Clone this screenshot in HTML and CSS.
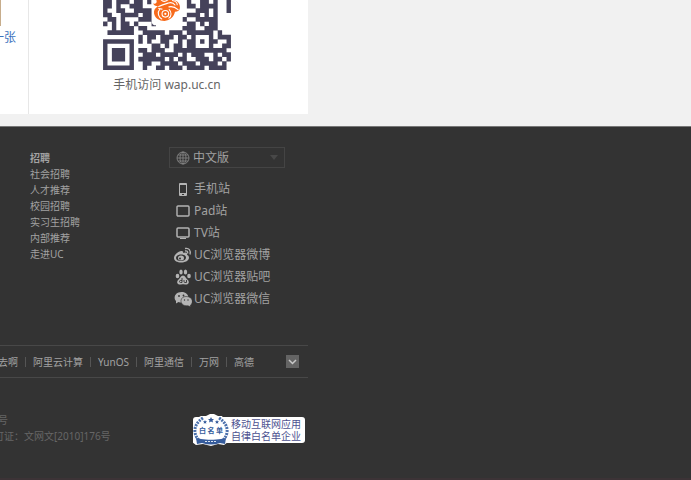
FILE: index.html
```html
<!DOCTYPE html>
<html lang="zh-CN">
<head>
<meta charset="utf-8">
<title>UC</title>
<link rel="stylesheet" href="styles.css">
</head>
<body>
<main class="top">
  <div class="panel">
    <section class="news">
      <div class="thumb"></div>
      <a class="news-link" href="#">一张</a>
    </section>
    <section class="mobile">
      <svg class="qr" viewBox="0 0 464 254" role="img" aria-label="wap.uc.cn">
        <path id="modules" fill="#45425a"/>
        <path fill="#fff" d="M176 0h112v76q0 16-16 16h-80q-16 0-16-16z"/>
        <path fill="#f76b1c" d="M193 0h62c16 3 25 15 24 28 0 10-8 15-18 15-4 19-17 31-38 33-20 0-34-10-38-27-2-11 4-20 14-26-9 0-15-4-17-10 8 2 16-3 11-13z"/>
        <g fill="none" stroke="#fff" stroke-width="4" stroke-linecap="round">
          <path d="M211 0c7 8 18 5 26-2M202 24c12-6 22-9 35-13 10-3 19 0 24 7M239 25c12-3 25 3 33 10M252 2c11 2 17 9 17 15"/>
          <circle cx="226" cy="50" r="12"/><path d="M205 35c-10 11-3 28 8 34M240 35c9 8 9 23-1 31M214 33l-12-2"/>
        </g>
        <circle cx="226" cy="50" r="4" fill="#fff"/>
      </svg>
      <p class="caption">手机访问 wap.uc.cn</p>
    </section>
  </div>
</main>
<footer class="footer">
  <div class="columns">
    <section class="jobs">
      <h2>招聘</h2>
      <ul>
        <li><a href="#">社会招聘</a></li>
        <li><a href="#">人才推荐</a></li>
        <li><a href="#">校园招聘</a></li>
        <li><a href="#">实习生招聘</a></li>
        <li><a href="#">内部推荐</a></li>
        <li><a href="#">走进UC</a></li>
      </ul>
    </section>
    <section class="sites">
      <button class="language" type="button">
        <svg width="14" height="14" viewBox="0 0 14 14" fill="none" stroke="#8c8c8c" stroke-width=".8"><circle cx="7" cy="7" r="6"/><ellipse cx="7" cy="7" rx="3" ry="6"/><path d="M7 1v12M1 7h12M2 4h10M2 10h10"/></svg>
        <span>中文版</span>
        <svg class="caret" width="8" height="5" viewBox="0 0 8 5"><path d="M0 0h8L4 5z" fill="#484848"/></svg>
      </button>
      <ul>
        <li><a href="#"><svg viewBox="0 0 18 16"><path fill="#b4b4b4" fill-rule="evenodd" d="M6 2h6q1 0 1 1v11q0 1-1 1H6q-1 0-1-1V3q0-1 1-1zM6 4v8h6V4zM8 13v1h2v-1z"/></svg>手机站</a></li>
        <li><a href="#"><svg viewBox="0 0 18 16"><rect x="3" y="3" width="12" height="10" rx="1" fill="none" stroke="#b4b4b4" stroke-width="1.4"/></svg>Pad站</a></li>
        <li><a href="#"><svg viewBox="0 0 18 16"><rect x="3" y="3" width="12" height="9" rx="1" fill="none" stroke="#b4b4b4" stroke-width="1.5"/><path d="M6 13h6v1H6z" fill="#b4b4b4"/></svg>TV站</a></li>
        <li><a href="#"><svg viewBox="0 0 18 16"><path fill="#b4b4b4" fill-rule="evenodd" d="M7 4C3 5 0 8 0 11c0 6 14 6 15 0 0-2-1-3-2-3 1-3-2-3-4-2 1-2-1-2-2-2zm0 3.500c3 0 5 1 5 3S10 14 7 14s-5-1-5-3 2-3.500 5-3.500z"/><ellipse cx="7" cy="11" rx="3" ry="2.500" fill="#b4b4b4"/><circle cx="6" cy="11.500" r="1" fill="#333"/><path d="M11 1.500c4-1 6 2 5 6M11 4c2-.500 3 .500 2.700 2.500" fill="none" stroke="#b4b4b4" stroke-width="1.300"/></svg>UC浏览器微博</a></li>
        <li><a href="#"><svg viewBox="0 0 18 16"><g fill="#b4b4b4"><ellipse cx="3.500" cy="7" rx="1.800" ry="2.300"/><ellipse cx="7" cy="3" rx="1.700" ry="2.500"/><ellipse cx="11.500" cy="3" rx="1.700" ry="2.500"/><ellipse cx="15" cy="7" rx="1.800" ry="2.300"/><path d="M9 6.500c2 0 3 3 5 4.500 2 3 0 5-3 4.500-1.500-.5-2.500-.5-4 0-3 .5-5-1.500-3-4.500 2-1.500 3-4.500 5-4.500z"/></g><path d="M8 9v4.500H6.500q-1 0-1-1t1-1H8M10 11v1.500q0 1 1 1h1.500V11" fill="none" stroke="#333" stroke-width=".9"/></svg>UC浏览器贴吧</a></li>
        <li><a href="#"><svg viewBox="0 0 18 16"><path fill="#b4b4b4" d="M7.500 1c9 0 9 10.500 0 10.500-1 0-2 0-3-.5L2 12.500V10C-1 7 1 1 7.500 1z"/><path fill="#b4b4b4" stroke="#333" stroke-width=".6" d="M12 5.500c7.500 0 7.500 7 4.500 8.500V15.800L14 14.800C5 15.500 5 5.500 12 5.500z"/><g fill="#333"><circle cx="5" cy="5" r=".9"/><circle cx="9.500" cy="4.500" r=".9"/><circle cx="10.500" cy="9" r=".7"/><circle cx="14" cy="9" r=".7"/></g></svg>UC浏览器微信</a></li>
      </ul>
    </section>
  </div>
  <nav class="partners">
    <a href="#">去啊</a><i></i><a href="#">阿里云计算</a><i></i><a href="#">YunOS</a><i></i><a href="#">阿里通信</a><i></i><a href="#">万网</a><i></i><a href="#">高德</a>
    <button class="more" type="button" aria-label="更多"><svg width="9" height="6" viewBox="0 0 9 6"><path d="M1 1l3.500 3.500L8 1" fill="none" stroke="#c8c8c8" stroke-width="1.500"/></svg></button>
  </nav>
  <div class="legal">
    <div class="license"><p>号</p><p>可证：文网文[2010]176号</p></div>
    <a class="badge" href="#">
      <svg class="seal" width="36" height="34" viewBox="0 0 36 34">
        <path fill="#fff" d="M8 3l5 0 4-2h4l4 2h4l3 5 3 5v8l-2 4 2 4-4 3-6-1-7 2-8-2-7 1-4-3 2-5-3-5 1-8 3-5z"/>
        <path d="M10 5C-1 12 0 23 8 29M26 5c11 7 10 18 2 24" fill="none" stroke="#4a70ac" stroke-width="3" stroke-dasharray="2 1"/>
        <path fill="#365c9c" d="M18 4l1 2h2l-1.500 1.500.5 2-2-1-2 1 .5-2L15 6h2zM12 7l.6 1.300H14l-1 1 .3 1.400-1.300-.7-1.300.7.300-1.400-1-1h1.400zM24 7l.6 1.300H26l-1 1 .3 1.400-1.300-.7-1.300.7.300-1.400-1-1h1.400zM3 25l5 1c6 1 14 1 20 0l5-1-1 6-5-1c-6 2-12 2-18 0l-5 1z"/>
        <path d="M12 28.500h12" stroke="#dbe5f3" stroke-dasharray="2 1"/>
        <text class="seal-text" x="18" y="20" text-anchor="middle">白 名 单</text>
      </svg>
      <span>移动互联网应用<br>自律白名单企业</span>
    </a>
  </div>
</footer>
<script src="qr.js"></script>
</body>
</html>
```
FILE: styles.css
```css
* { box-sizing: border-box; }
body {
  margin: 0;
  min-height: 100vh;
  display: flex;
  flex-direction: column;
  background: #333;
  color: #a2a2a2;
  font: 10px/16px "Noto Sans", "Noto Sans CJK SC", sans-serif;
  overflow-x: hidden;
}
h2, p, ul { margin: 0; padding: 0; }
ul { list-style: none; }
a { color: inherit; text-decoration: none; }
button { font: inherit; color: inherit; border-radius: 0; }
.top { background: #f1f1f1; padding-bottom: 12px; border-bottom: 1px solid #777; }
.panel { display: flex; max-width: 308px; background: #fff; }
.news { width: 29px; padding-bottom: 66px; border-right: 1px solid #e7e7e7; overflow: hidden; }
.thumb { width: 1px; height: 26px; background: #c7ad8c; }
.news-link {
  display: flex;
  justify-content: flex-end;
  width: 16px;
  margin-top: 2px;
  font-size: 12px;
  line-height: 20px;
  color: #3b72bd;
  white-space: nowrap;
}
.mobile {
  flex: 1;
  display: flex;
  flex-direction: column;
  align-items: center;
  padding-right: 3px;
}
.qr { display: block; width: 128px; height: 70px; }
.caption { margin-top: 5px; font-size: 12px; line-height: 20px; color: #666; }
.footer { flex: 1; border-bottom: 2px solid #3c3336; }
.columns {
  display: grid;
  grid-template-columns: 139px 116px;
  padding: 20px 0 35px 30px;
}
.jobs { padding-top: 3px; }
.jobs h2 { font-size: 10px; line-height: 16px; }
.language {
  display: flex;
  align-items: center;
  width: 100%;
  height: 21px;
  margin-bottom: 10px;
  padding: 0 6px;
  gap: 3px;
  background: transparent;
  border: 1px solid #444;
  font-size: 12px;
}
.caret { margin-left: auto; }
.sites li a {
  display: flex;
  align-items: center;
  height: 22px;
  gap: 2px;
  padding-left: 5px;
  font-size: 12px;
  white-space: nowrap;
}
.sites li svg { width: 18px; height: 16px; }
.partners {
  display: flex;
  align-items: center;
  max-width: 308px;
  height: 33px;
  padding-right: 9px;
  border: solid #484848;
  border-width: 1px 0;
  white-space: nowrap;
}
.partners a:first-child { margin-left: -2px; }
.partners i { width: 1px; height: 10px; margin: 0 7px; background: #555; }
.more {
  display: flex;
  align-items: center;
  justify-content: center;
  width: 13px;
  height: 13px;
  margin-left: auto;
  padding: 0;
  border: 0;
  background: #646464;
}
.legal {
  display: flex;
  align-items: flex-start;
  justify-content: space-between;
  max-width: 305px;
  padding-top: 34px;
  color: #666;
}
.license { margin-left: -6px; }
.license p:first-child { padding-left: 4px; }
.badge {
  display: flex;
  align-items: center;
  height: 26px;
  margin-top: 5px;
  padding-right: 4px;
  border-radius: 3px;
  background: #fff;
  color: #4d5290;
  line-height: 12px;
  white-space: nowrap;
}
.seal { margin-right: 2px; }
.seal-text { font: bold 7px "Noto Sans CJK SC", sans-serif; fill: #365c9c; }
```
FILE: qr.js
```js
// Lower rows of the 29-module code; each module is a 16-unit square.
const rows = [
  "11011101101000000001001101001",
  "11010011100000000001101111001",
  "10011001111100000000011101001",
  "11001111011100000001110101000",
  "01101000111100000010011111000",
  "10101101000100000001101011000",
  "00101110110000000011100111000",
  "01111110011111011101111110100",
  "00000000101101110110100010111",
  "11111110101001100101101011001",
  "10000010000110101101100010011",
  "10111010110111001111111111110",
  "10111010011101111010111001011",
  "10111010111111010110011101101",
  "10000010011001111011101111010",
  "11111110010011011101111011110"
];
const size = 16;
const path = [];
rows.forEach((row, y) => {
  for (const run of row.matchAll(/1+/g)) {
    const width = run[0].length * size;
    path.push(`M${run.index * size} ${y * size - 2}h${width}v${size + 1}h-${width}z`);
  }
});
document.getElementById("modules").setAttribute("d", path.join(""));
```
